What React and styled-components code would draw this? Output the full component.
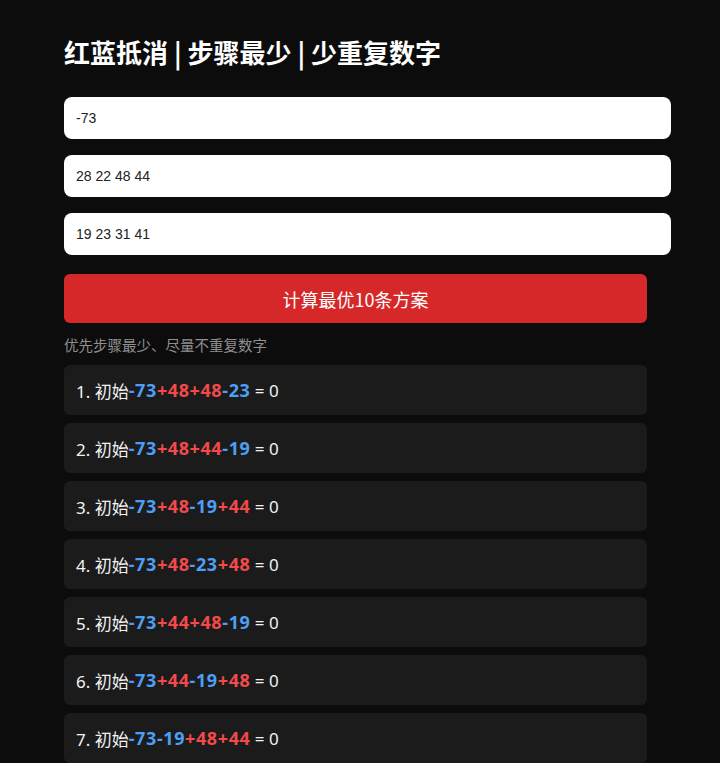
import { useState } from "react";
import styled, { createGlobalStyle } from "styled-components";

const GlobalStyle = createGlobalStyle`
  html, body {
    margin: 0;
    background: #0c0c0c;
  }
  body {
    font-family: "Noto Sans", "Noto Sans CJK SC", sans-serif;
    color: #f2f2f2;
  }
`;

const plans = [
  [-73, 48, 48, -23],
  [-73, 48, 44, -19],
  [-73, 48, -19, 44],
  [-73, 48, -23, 48],
  [-73, 44, 48, -19],
  [-73, 44, -19, 48],
  [-73, -19, 48, 44],
];

const App = () => {
  const [target, setTarget] = useState("-73");
  const [reds, setReds] = useState("28 22 48 44");
  const [blues, setBlues] = useState("19 23 31 41");

  return (
    <>
      <GlobalStyle />
      <Page>
        <Title>红蓝抵消 | 步骤最少 | 少重复数字</Title>
        <Field value={target} onChange={(e) => setTarget(e.target.value)} />
        <Field value={reds} onChange={(e) => setReds(e.target.value)} />
        <Field value={blues} onChange={(e) => setBlues(e.target.value)} />
        <Button>计算最优10条方案</Button>
        <Hint>优先步骤最少、尽量不重复数字</Hint>
        <List>
          {plans.map((steps, i) => (
            <Card key={i}>
              <span>{i + 1}. 初始</span>
              {steps.map((n, j) => (
                <Num key={j} $neg={n < 0}>
                  {n < 0 ? n : `+${n}`}
                </Num>
              ))}
              <span> = 0</span>
            </Card>
          ))}
        </List>
      </Page>
    </>
  );
};

const Page = styled.div`
  width: 583px;
  padding: 36px 0 0 64px;
  display: flex;
  flex-direction: column;
`;

const Title = styled.h2`
  margin: 0 0 29px;
  font-family: "Noto Sans CJK SC", sans-serif;
  font-size: 26px;
  line-height: 32px;
  font-weight: 700;
  color: #ffffff;
  white-space: pre;
`;

const Field = styled.input`
  box-sizing: content-box;
  width: 100%;
  height: 18px;
  padding: 12px;
  margin: 0 0 16px;
  border: 0;
  border-radius: 8px;
  background: #ffffff;
  color: #222;
  font-family: "Liberation Sans", Arial, sans-serif;
  font-size: 14px;
  outline: none;

  &:last-of-type {
    margin-bottom: 19px;
  }
`;

const Button = styled.button`
  height: 49px;
  border: 0;
  border-radius: 6px;
  background: #d62828;
  color: #ffffff;
  font-family: "Noto Sans CJK SC", sans-serif;
  font-size: 18px;
  cursor: pointer;
`;

const Hint = styled.p`
  margin: 12px 0 10px;
  font-family: "Noto Sans CJK SC", sans-serif;
  font-size: 14.5px;
  line-height: 20px;
  color: #8f8f8f;
`;

const List = styled.div`
  display: flex;
  flex-direction: column;
  gap: 8px;
`;

const Card = styled.div`
  height: 50px;
  display: flex;
  align-items: center;
  padding: 0 12px;
  border-radius: 6px;
  background: #1b1b1b;
  font-size: 17px;
  color: #f2f2f2;
  white-space: pre;
`;

const Num = styled.span`
  font-size: 18px;
  font-weight: 700;
  letter-spacing: 0.6px;
  color: ${(p) => (p.$neg ? "#4d9ff5" : "#f24a4a")};
`;

export default App;
